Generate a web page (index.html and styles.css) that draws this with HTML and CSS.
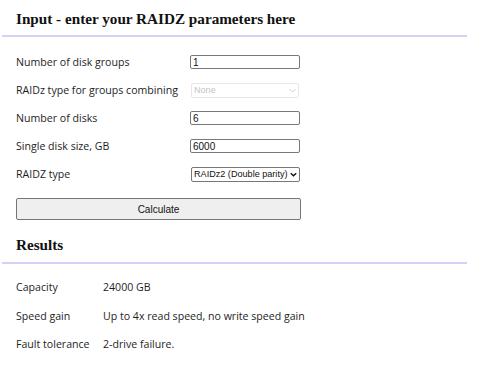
FILE: index.html
```html
<!DOCTYPE html>
<html>
<head>
<meta charset="utf-8">
<link rel="stylesheet" href="styles.css">
</head>
<body>
<div class="page">
  <h2 class="title">Input - enter your RAIDZ parameters here</h2>
  <div class="rule"></div>
  <div class="form">
    <div class="row"><span class="label">Number of disk groups</span><input class="field" type="text" value="1"></div>
    <div class="row"><span class="label">RAIDz type for groups combining</span><select class="sel disabled" disabled><option>None</option></select></div>
    <div class="row"><span class="label">Number of disks</span><input class="field" type="text" value="6"></div>
    <div class="row"><span class="label">Single disk size, GB</span><input class="field" type="text" value="6000"></div>
    <div class="row"><span class="label">RAIDZ type</span><select class="sel type"><option>RAIDz2 (Double parity)</option></select></div>
    <button class="calc">Calculate</button>
  </div>
  <h2 class="title results">Results</h2>
  <div class="rule"></div>
  <div class="out">
    <div class="orow"><span class="olabel">Capacity</span><span>24000 GB</span></div>
    <div class="orow"><span class="olabel">Speed gain</span><span>Up to 4x read speed, no write speed gain</span></div>
    <div class="orow"><span class="olabel">Fault tolerance</span><span>2-drive failure.</span></div>
  </div>
</div>
</body>
</html>
```
FILE: styles.css
```css
html, body { margin: 0; padding: 0; background: #fff; }
body { font-family: "Open Sans", "Noto Sans", sans-serif; font-size: 10.6px; color: #1e1e1e; }
.page { padding: 0 16px 0 2px; width: 465px; }
.title { font-family: "Liberation Serif", serif; font-weight: bold; font-size: 15.2px; color: #111; margin: 0; padding: 10px 0 0 14px; height: 25px; line-height: 18px; }
.rule { height: 2px; background: #d2d2f6; }
.form { padding: 11px 0 0 14px; }
.row { display: flex; align-items: center; height: 28px; }
.label { width: 174px; }
.field { width: 104px; height: 12px; padding: 0 2px; border: 1px solid #777; border-radius: 2px; font-family: "Liberation Sans", sans-serif; font-size: 10px; color: #111; margin: 0; }
.sel { -webkit-appearance: none; appearance: none; font-family: "Liberation Sans", sans-serif; font-size: 9.1px; height: 15px; padding: 0 0 0 2px; margin: 0; border: 1px solid #777; border-radius: 2px; background-color: #fff; background-repeat: no-repeat; background-position: right 2px center; background-size: 7px 5px; }
.sel.disabled { width: 108px; color: #aaa; border-color: #ddd; margin-left: 1px; background-image: url("data:image/svg+xml,%3Csvg xmlns='http://www.w3.org/2000/svg' viewBox='0 0 7 5'%3E%3Cpath d='M0.5 1l3 3 3-3' fill='none' stroke='%23bbb' stroke-width='1'/%3E%3C/svg%3E"); }
.sel.type { width: 109px; color: #111; margin-left: 1px; background-image: url("data:image/svg+xml,%3Csvg xmlns='http://www.w3.org/2000/svg' viewBox='0 0 7 5'%3E%3Cpath d='M0.8 1.2l2.7 2.6 2.7-2.6' fill='none' stroke='%23111' stroke-width='1.4'/%3E%3C/svg%3E"); }
.calc { display: block; width: 285px; height: 22px; margin: 10px 0 0 0; background: #efefef; border: 1px solid #767676; border-radius: 2px; font-family: "Liberation Sans", sans-serif; font-size: 10px; color: #111; }
.results { padding-top: 16px; height: 26px; }
.out { padding: 9px 0 0 14px; }
.orow { display: flex; height: 28.5px; align-items: center; }
.olabel { width: 87px; }
```
